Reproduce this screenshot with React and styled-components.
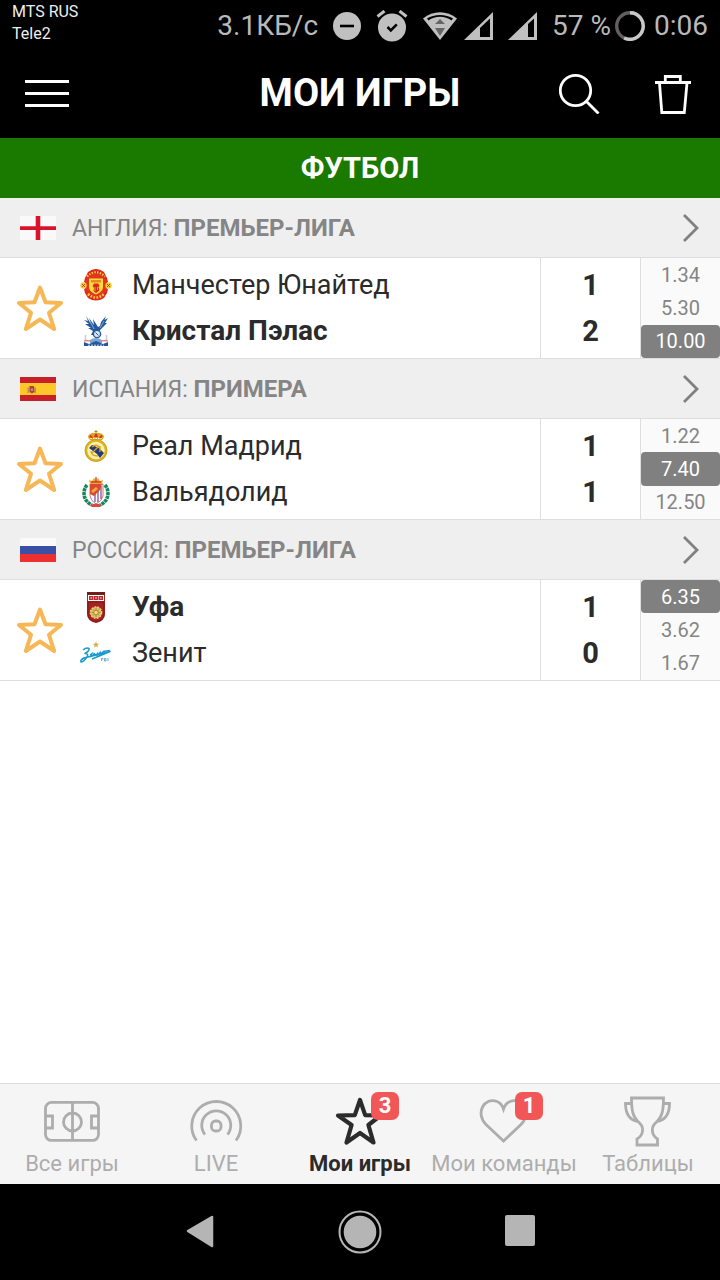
import React from "react";
import styled, { createGlobalStyle } from "styled-components";

const GlobalStyle = createGlobalStyle`
  *, *::before, *::after { box-sizing: border-box; }
  body {
    margin: 0;
    background: #fff;
    color: #2b2b2b;
    font-family: Roboto, "Liberation Sans", sans-serif;
  }
  button { border: 0; padding: 0; background: none; color: inherit; font: inherit; cursor: pointer; }
  a { color: inherit; text-decoration: none; }
  svg { display: block; flex: none; }
  h1, h2, h3, p, ul { margin: 0; padding: 0; }
`;

const Screen = styled.div`
  display: flex;
  flex-direction: column;
  min-height: 100vh;
`;

const StatusBar = styled.div`
  display: flex;
  justify-content: space-between;
  height: 48px;
  padding: 0 12px;
  background: #000;
`;

const Carriers = styled.div`
  padding-top: 1px;
  color: #eee;
  font-size: 16px;
  line-height: 22px;
`;

const IndicatorGroup = styled.div`
  display: flex;
  align-items: center;
  gap: ${(p) => p.$gap}px;
`;

const Indicators = styled(IndicatorGroup)`
  height: 52px;
  color: #b9b9b9;
  font-size: 28px;
  line-height: 52px;
`;

const AppBar = styled.header`
  display: grid;
  grid-template-columns: 1fr auto 1fr;
  align-items: center;
  height: 90px;
  padding: 0 24px;
  background: #000;
  color: #fff;
`;

const Title = styled.h1`
  font-size: 38px;
  line-height: 48px;
  font-weight: 700;
`;

const IconButton = styled.button`
  display: flex;
  align-items: center;
  justify-content: center;
  height: 48px;
`;

const Actions = styled.div`
  display: flex;
  justify-content: flex-end;
  gap: 50px;
`;

const SportBar = styled.h2`
  height: 60px;
  background: #1a7a00;
  color: #fff;
  font-size: 29px;
  line-height: 60px;
  font-weight: 700;
  text-align: center;
`;

const Main = styled.main`
  flex: 1;
`;

const LeagueLink = styled.a`
  display: flex;
  align-items: center;
  height: 60px;
  padding: 0 20px;
  border-bottom: 1px solid #dedede;
  background: #efefef;
  color: #858585;
`;

const LeagueName = styled.h3`
  flex: 1;
  padding: 2px 0 0 16px;
  font-size: 23px;
  line-height: 32px;
  font-weight: 400;

  b {
    font-size: 24px;
  }
`;

const MatchRow = styled.article`
  display: flex;
  height: 101px;
  border-bottom: 1px solid #dedede;
  background: #fff;
`;

const StarButton = styled.button`
  display: flex;
  align-items: center;
  justify-content: center;
  width: 80px;
`;

const Teams = styled.div`
  flex: 1;
  padding: 4px 0;
`;

const Team = styled.div`
  display: flex;
  align-items: center;
  gap: 20px;
  height: 46px;
  font-size: ${(p) => (p.$winner ? 28 : 27)}px;
  line-height: 46px;
  font-weight: ${(p) => (p.$winner ? 700 : 400)};
`;

const Scores = styled.div`
  width: 100px;
  padding: 4px 0;
  border-left: 1px solid #dedede;
  text-align: center;
`;

const Score = styled.div`
  height: 46px;
  font-size: 29px;
  line-height: 46px;
  font-weight: 700;
`;

const Odds = styled.div`
  display: grid;
  grid-template-rows: repeat(3, 1fr);
  width: 80px;
  border-left: 1px solid #dedede;
  background: #fafafa;
`;

const Odd = styled.div`
  display: flex;
  align-items: center;
  justify-content: center;
  border-radius: 4px;
  background: ${(p) => (p.$hit ? "#808080" : "transparent")};
  color: ${(p) => (p.$hit ? "#fff" : "#858585")};
  font-size: 20px;
  line-height: 24px;
`;

const TabBar = styled.nav`
  display: grid;
  grid-template-columns: repeat(5, minmax(0, 1fr));
  height: 101px;
  border-top: 1px solid #dcdcdc;
  background: #f5f5f5;
`;

const Tab = styled.a`
  display: flex;
  flex-direction: column;
  align-items: center;
  padding-top: 10px;
  color: ${(p) => (p.$active ? "#2b2b2b" : "#adadad")};
  font-size: 22px;
  line-height: 28px;
  font-weight: ${(p) => (p.$active ? 700 : 400)};
  white-space: nowrap;
`;

const TabIcon = styled.span`
  position: relative;
  width: 56px;
  height: 56px;
`;

const Badge = styled.span`
  position: absolute;
  top: -2px;
  right: -11px;
  width: 28px;
  height: 28px;
  border-radius: 7px;
  background: #f25757;
  color: #fff;
  font-size: 22px;
  line-height: 28px;
  font-weight: 700;
  text-align: center;
`;

const SystemNav = styled.nav`
  display: grid;
  grid-template-columns: repeat(3, 160px);
  justify-content: center;
  height: 96px;
  background: #000;
`;

const SystemButton = styled.button`
  display: flex;
  align-items: center;
  justify-content: center;
`;

/* Status icons */

const DndIcon = () => (
  <svg width="28" height="28" viewBox="0 0 28 28" aria-hidden="true">
    <circle cx="14" cy="14" r="14" fill="#c0c0c0" />
    <path d="M7 14h14" stroke="#000" strokeWidth="2.6" />
  </svg>
);

const AlarmIcon = () => (
  <svg width="32" height="32" viewBox="0 0 32 32" aria-hidden="true">
    <circle cx="16" cy="17.500" r="14" fill="#c0c0c0" />
    <path d="M1.500 6.500 8.500 1M30.500 6.500 23.500 1" stroke="#000" strokeWidth="6.500" />
    <path d="M1.500 6.500 8.500 1M30.500 6.500 23.500 1" stroke="#c0c0c0" strokeWidth="3" />
    <path d="m11.500 17 3.300 3.300 6-6" fill="none" stroke="#000" strokeWidth="2.600" />
  </svg>
);

const WifiIcon = () => (
  <svg width="34" height="28" viewBox="0 0 34 28" aria-hidden="true">
    <path d="M0 6.500C10-1.800 24-1.800 34 6.500L17 28Z" fill="#c0c0c0" />
    <path d="M4 6.500C11 1.800 23 1.800 30 6.500L28.500 8.500C22 3.600 12 3.600 5.500 8.500Z" fill="#000" />
    <path d="m17 7 5 5H12ZM12 16h10l-5 8Z" fill="#666" />
  </svg>
);

const SignalIcon = ({ cut }) => (
  <svg width="29" height="28" viewBox="0 0 29 28" aria-hidden="true">
    <path d="M29 0v28H0Z" fill="#c0c0c0" />
    <path d={`M${cut} 25V${32 - cut}L26 6.500V25Z`} fill="#000" />
  </svg>
);

const BatteryRing = () => (
  <svg width="30" height="30" viewBox="0 0 30 30" fill="none" strokeWidth="3.400" aria-hidden="true">
    <circle cx="15" cy="15" r="13.300" stroke="#606060" />
    <path d="M15 1.700A13.300 13.300 0 1 1 9.200 27" stroke="#c8c8c8" />
  </svg>
);

/* App bar icons */

const MenuIcon = () => (
  <svg width="46" height="28" viewBox="0 0 46 28" stroke="#fff" strokeWidth="3" aria-hidden="true">
    <path d="M1 2.500h44M1 14.500h44M1 26.500h44" />
  </svg>
);

const SearchIcon = () => (
  <svg width="42" height="42" viewBox="0 0 42 42" fill="none" stroke="#fff" strokeWidth="2.800" aria-hidden="true">
    <circle cx="17.500" cy="18.500" r="15.200" />
    <path d="m28.500 29.500 12 12" />
  </svg>
);

const TrashIcon = () => (
  <svg width="46" height="42" viewBox="0 0 46 42" fill="none" stroke="#fff" strokeWidth="2.800" aria-hidden="true">
    <path d="M5 10.500h36M15.300 10V4.500h15V10M9.500 11l2.300 29.500h22.500L37 11" />
  </svg>
);

const ChevronIcon = () => (
  <svg width="18" height="30" viewBox="0 0 18 30" fill="none" stroke="#808080" strokeWidth="2.800" aria-hidden="true">
    <path d="m2 2 13 13L2 28" />
  </svg>
);

const StarIcon = ({ size, color, weight }) => (
  <svg width={size} height={size} viewBox="0 0 48 48" fill="none" stroke={color} strokeWidth={weight} strokeLinejoin="round" aria-hidden="true">
    <path d="M24 3.500 29.500 18.300 45 19 33 28.800 38.200 45 24 35.500 9.800 45 15 28.800 3 19 18.500 18.300Z" />
  </svg>
);

/* Tab icons, all drawn on a 56px square */

const TabSvg = ({ children }) => (
  <svg width="56" height="56" viewBox="0 0 56 56" fill="none" stroke="currentColor" strokeWidth="2.800" aria-hidden="true">
    {children}
  </svg>
);

const PitchIcon = () => (
  <TabSvg>
    <rect x="1.500" y="8.400" width="53" height="38" rx="6" />
    <path d="M28.500 8v38M1.500 22h7v12h-7M54.500 22h-7v12h7" />
    <circle cx="28.500" cy="28" r="9" />
  </TabSvg>
);

const LiveIcon = () => (
  <TabSvg>
    <rect x="23.500" y="27" width="9.500" height="10" rx="4" />
    <path d="M17 40.500a14.500 14.500 0 1 1 22.500 0M8.500 46.500a24.500 24.500 0 1 1 39.500 0" />
  </TabSvg>
);

const MyGamesIcon = () => (
  <TabSvg>
    <path
      d="M28 6 33.200 21.100 48.500 21.500 36.400 31 41.500 48.500 28 39 14.500 48.500 19.600 31 6 21.500 22.800 21.100Z"
      strokeWidth="4.200"
      strokeLinejoin="round"
    />
  </TabSvg>
);

const HeartIcon = () => (
  <TabSvg>
    <path d="M27.500 47 10 30.500C-1 19 8 3 21 7.500 25 9 26.500 12 27.500 15 28.500 12 30 9 34 7.500 47 3 56 19 45 30.500Z" />
  </TabSvg>
);

const TrophyIcon = () => (
  <TabSvg>
    <path d="M11.500 4H43.500C43.500 16 42.500 23 35.500 29 31 33 31 40.500 37.500 45V51H17V45C24 40.500 24 33 19.500 29 12.500 23 11.500 16 11.500 4Z" />
    <path d="M12 9.500H5.500C5.500 19 9 25.500 17 27.500M43 9.500H49.500C49.500 19 46 25.500 38 27.500" />
  </TabSvg>
);

/* Flags */

const Flag = ({ children, label }) => (
  <svg width="36" height="24" viewBox="0 0 36 24" role="img" aria-label={label}>
    {children}
  </svg>
);

const flags = {
  england: (
    <Flag label="Англия">
      <path fill="#f9f9f9" d="M0 0h36v24H0z" />
      <path fill="#d6152c" d="M15.700 0h4.600v24h-4.600zM0 10.200h36V14H0z" />
    </Flag>
  ),
  spain: (
    <Flag label="Испания">
      <path fill="#c8202a" d="M0 0h36v24H0z" />
      <path fill="#ffc82a" d="M0 6h36v12H0z" />
      <path fill="#b98a5a" d="M7.500 10.500h1.500V16H7.500zM14.500 10.500H16V16h-1.500z" />
      <path fill="#b9402e" d="M9.500 9h4.500l.5 6-2.500 1.500L9.500 15z" />
      <path fill="#a9958f" d="M11 11.500h2v2.500h-2z" />
    </Flag>
  ),
  russia: (
    <Flag label="Россия">
      <path fill="#fafafa" d="M0 0h36v8H0z" />
      <path fill="#3a50a4" d="M0 8h36v8H0z" />
      <path fill="#ee3030" d="M0 16h36v8H0z" />
    </Flag>
  ),
};

/* Club crests, all drawn on a 32px square */

const Crest = ({ children }) => (
  <svg width="32" height="32" viewBox="0 0 32 32" fill="none" aria-hidden="true">
    {children}
  </svg>
);

const crests = {
  united: (
    <Crest>
      <path d="M8 3Q16-3 24 3L27 9 28 13H4L5 9ZM4 20H28L27 24 24 29Q16 34 8 29L5 24Z" fill="#d9291c" />
      <circle cx="16" cy="16" r="11.500" fill="#e33420" />
      <path d="M7 7.500Q16-1 25 7.500" stroke="#f6c93c" strokeWidth="2.200" strokeDasharray="1.500 1.300" />
      <path d="M8 25Q16 32 24 25" stroke="#f6c93c" strokeWidth="2.600" strokeDasharray="1.800 1.300" />
      <path d="M9 9.500H23V18Q23 23 16 25.500 9 23 9 18Z" fill="#f9df35" />
      <path d="M11 11h10v2.500H11z" fill="#e8892a" />
      <path d="M14 14.500h4l1.500 2-1 1.500 1 3.500-3.500 2.500-2.500-2 .5-3-1.500-2Z" fill="#d9291c" />
      <path d="M15 18v4M17.500 18v3" stroke="#f9c935" strokeWidth=".7" />
      <circle cx="3.500" cy="16.500" r="3.200" fill="#f9c935" />
      <circle cx="28.500" cy="16.500" r="3.200" fill="#f9c935" />
      <path d="m2 15 3 3M5 15l-3 3M27 15l3 3M30 15l-3 3" stroke="#7a3a12" strokeWidth=".7" />
    </Crest>
  ),
  palace: (
    <Crest>
      <path d="M6 1 11 9 9 3 14 10 13 4 18 12 20 11 21 7 26 1 24.500 5 28 3 25 8 27 8 21 14 18 18 14 17 15 20H11L13 16 8 13 11 13 5 9 9 9 4 5 8 6Z" fill="#24589b" />
      <path d="M10 6 14 14M20 13 24 6" stroke="#8fb6dd" strokeWidth=".9" />
      <circle cx="17" cy="19" r="3.600" fill="#dce8f6" stroke="#24589b" strokeWidth="1.400" />
      <path d="m15.500 17.500 3 3" stroke="#24589b" strokeWidth="1" />
      <path d="M5.500 20v6M26.500 20v6" stroke="#c4c9d6" strokeWidth="1.500" />
      <path d="M4 25h7v1.500H4zM21 25h7v1.500h-7z" fill="#df8b94" />
      <path d="M10 25Q16 21 22 25V28H10Z" fill="#7fa3cf" />
      <path d="M4 27 9 29 16 26 23 29 28 27V31H4Z" fill="#24589b" />
      <path d="M8 30.200H24" stroke="#cfddef" strokeWidth="1" strokeDasharray="2 1" />
    </Crest>
  ),
  real: (
    <Crest>
      <path d="M10 10Q6 6 10 4 13 2 16 3 19 2 22 4 26 6 22 10Z" fill="#dda51c" />
      <path d="M11 8Q8 6 11 5L13 8M21 8Q24 6 21 5L19 8M14 7 15 4H17L18 7Z" fill="#d12d41" />
      <path d="M16 0v4M14.500 1.500h3" stroke="#b38b16" strokeWidth="1" />
      <path d="M10.500 8.500h11" stroke="#fff" strokeDasharray="1.500 1" />
      <circle cx="16" cy="20.500" r="10" fill="#f8efb0" stroke="#dfb51e" strokeWidth="2.500" />
      <circle cx="16" cy="20.500" r="11" stroke="#b68f17" strokeWidth=".5" />
      <path d="M9 18 12 15 19 18 24 23 20 28 17 24Z" fill="#243a7b" />
      <path d="M12 23l7-7M12 17q5-4 8 1M11 21q0 5 7 5M20 16v6" stroke="#d9a313" strokeWidth="1.300" />
    </Crest>
  ),
  valladolid: (
    <Crest>
      <path d="M7 9C2 15 3 25 12 29M25 9C30 15 29 25 20 29" stroke="#16885c" strokeWidth="3.600" strokeDasharray="3.200 .6" />
      <path d="M10 29Q16 26 22 29L20 31H12Z" fill="#d34a49" />
      <path d="M10 8H23V20Q22 25 16 28 11 25 10 20Z" fill="#fff" stroke="#b85a47" strokeWidth=".8" />
      <path d="M15 14v12M18 10v16M21 10v13" stroke="#8652a4" strokeWidth="1.300" />
      <path d="M10 8H22L20 14 14 20 10 18Z" fill="#d94735" />
      <path d="M11 15 16 11 18 13 13 17Z" fill="#efad36" />
      <path d="M10 8 9 4 12 5 14 2 16 4 18 2 20 5 23 4 22 8Z" fill="#eba934" />
      <path d="M11 6h10M16 1v5" stroke="#c9442d" strokeWidth="1.300" />
    </Crest>
  ),
  ufa: (
    <Crest>
      <path d="M7 1H25V23Q25 30 16 32 7 30 7 23Z" fill="#a62224" />
      <path d="M7 1h18v3H7z" fill="#711c1d" />
      <path d="M8 4h16v6H8z" fill="#fff" />
      <path d="M9 5h4.500v4H9zM14 5h4v4h-4zM18.500 5H23v4h-4.500z" fill="#bd2727" />
      <path d="M10.500 6.500h1.500v1h-1.500zM15.300 6.500h1.500v1h-1.500zM20 6.500h1.500v1H20z" fill="#fff" />
      <path d="M8 11h16v12q0 6-8 8-8-2-8-8Z" stroke="#7d191b" />
      <circle cx="16" cy="21.500" r="5.600" fill="#d9bf68" stroke="#efd06a" strokeWidth="1.500" strokeDasharray="2 1" />
      <path d="M16 17v9M11.500 21.500h9M13 18.500l6 6M19 18.500l-6 6" stroke="#9d8a3a" strokeWidth=".9" />
      <circle cx="16" cy="21.500" r="2.200" fill="#efdf85" stroke="#ac5221" strokeWidth=".6" />
    </Crest>
  ),
  zenit: (
    <Crest>
      <path d="m16 4.500 .9 2.200 2.400.1-1.900 1.500.7 2.300-2.100-1.300-2.100 1.300.7-2.300-1.900-1.500 2.400-.1Z" fill="#cfae4c" />
      <path d="M3 13Q6.500 10 9 11.500 9.500 14 5 16.500 9 16.500 7 20 3 25.500 1 25 0 23 4 21L30 14.500 12 22" stroke="#189bd0" strokeWidth="1.500" strokeLinejoin="round" />
      <path d="M10 18q4-3 2-1.500l-1.500 3q2 0 4-3.500l-1 3M14 17.500h3l1-2-1 3.500M18.500 18l2-3.500-.5 3 4-3.500-2 3.500M23 14.500 30 13.500" stroke="#189bd0" strokeWidth="1.300" />
      <path d="M21.500 24v-2.500h1.500v1.200M24.500 21.500h1.500V24h-1.500zM28 21v3" stroke="#5aa6cc" strokeWidth=".9" />
    </Crest>
  ),
};

const matches = [
  {
    country: "АНГЛИЯ",
    league: "ПРЕМЬЕР-ЛИГА",
    flag: "england",
    teams: [
      { name: "Манчестер Юнайтед", crest: "united", score: 1 },
      { name: "Кристал Пэлас", crest: "palace", score: 2, winner: true },
    ],
    odds: ["1.34", "5.30", "10.00"],
    hit: 2,
  },
  {
    country: "ИСПАНИЯ",
    league: "ПРИМЕРА",
    flag: "spain",
    teams: [
      { name: "Реал Мадрид", crest: "real", score: 1 },
      { name: "Вальядолид", crest: "valladolid", score: 1 },
    ],
    odds: ["1.22", "7.40", "12.50"],
    hit: 1,
  },
  {
    country: "РОССИЯ",
    league: "ПРЕМЬЕР-ЛИГА",
    flag: "russia",
    teams: [
      { name: "Уфа", crest: "ufa", score: 1, winner: true },
      { name: "Зенит", crest: "zenit", score: 0 },
    ],
    odds: ["6.35", "3.62", "1.67"],
    hit: 0,
  },
];

const tabs = [
  { label: "Все игры", Icon: PitchIcon },
  { label: "LIVE", Icon: LiveIcon },
  { label: "Мои игры", Icon: MyGamesIcon, badge: 3, active: true },
  { label: "Мои команды", Icon: HeartIcon, badge: 1 },
  { label: "Таблицы", Icon: TrophyIcon },
];

const Match = ({ match }) => (
  <section>
    <LeagueLink href="#league">
      {flags[match.flag]}
      <LeagueName>
        {match.country}: <b>{match.league}</b>
      </LeagueName>
      <ChevronIcon />
    </LeagueLink>
    <MatchRow>
      <StarButton aria-label="Убрать из моих игр">
        <StarIcon size={48} color="#f6b756" weight={4} />
      </StarButton>
      <Teams>
        {match.teams.map((t) => (
          <Team key={t.name} $winner={t.winner}>
            {crests[t.crest]}
            <span>{t.name}</span>
          </Team>
        ))}
      </Teams>
      <Scores>
        {match.teams.map((t) => (
          <Score key={t.name}>{t.score}</Score>
        ))}
      </Scores>
      <Odds>
        {match.odds.map((o, i) => (
          <Odd key={o} $hit={i === match.hit}>
            {o}
          </Odd>
        ))}
      </Odds>
    </MatchRow>
  </section>
);

export default function App() {
  return (
    <Screen>
      <GlobalStyle />
      <StatusBar>
        <Carriers>
          <p>MTS RUS</p>
          <p>Tele2</p>
        </Carriers>
        <Indicators $gap={15}>
          <span>3.1КБ/с</span>
          <DndIcon />
          <AlarmIcon />
          <IndicatorGroup $gap={7}>
            <WifiIcon />
            <SignalIcon cut={16} />
          </IndicatorGroup>
          <SignalIcon cut={20} />
          <IndicatorGroup $gap={9}>
            <IndicatorGroup $gap={4}>
              <span>57 %</span>
              <BatteryRing />
            </IndicatorGroup>
            <span>0:06</span>
          </IndicatorGroup>
        </Indicators>
      </StatusBar>
      <AppBar>
        <div>
          <IconButton aria-label="Меню">
            <MenuIcon />
          </IconButton>
        </div>
        <Title>МОИ ИГРЫ</Title>
        <Actions>
          <IconButton aria-label="Поиск">
            <SearchIcon />
          </IconButton>
          <IconButton aria-label="Удалить">
            <TrashIcon />
          </IconButton>
        </Actions>
      </AppBar>
      <Main>
        <SportBar>ФУТБОЛ</SportBar>
        {matches.map((m) => (
          <Match key={m.country} match={m} />
        ))}
      </Main>
      <TabBar>
        {tabs.map(({ label, Icon, badge, active }) => (
          <Tab key={label} href="#tab" $active={active} aria-current={active ? "page" : undefined}>
            <TabIcon>
              <Icon />
              {badge && <Badge>{badge}</Badge>}
            </TabIcon>
            {label}
          </Tab>
        ))}
      </TabBar>
      <SystemNav>
        <SystemButton aria-label="Назад">
          <svg width="28" height="34" viewBox="0 0 28 34" aria-hidden="true">
            <path d="M26 2v29L2 16Z" fill="#b5b5b5" stroke="#b5b5b5" strokeWidth="2.500" strokeLinejoin="round" />
          </svg>
        </SystemButton>
        <SystemButton aria-label="Домой">
          <svg width="44" height="44" viewBox="0 0 44 44" aria-hidden="true">
            <circle cx="22" cy="22" r="20.500" fill="none" stroke="#b5b5b5" strokeWidth="2" />
            <circle cx="22" cy="22" r="16.300" fill="#b5b5b5" />
          </svg>
        </SystemButton>
        <SystemButton aria-label="Недавние">
          <svg width="30" height="34" viewBox="0 0 30 34" aria-hidden="true">
            <rect width="30" height="31" rx="2" fill="#b5b5b5" />
          </svg>
        </SystemButton>
      </SystemNav>
    </Screen>
  );
}
